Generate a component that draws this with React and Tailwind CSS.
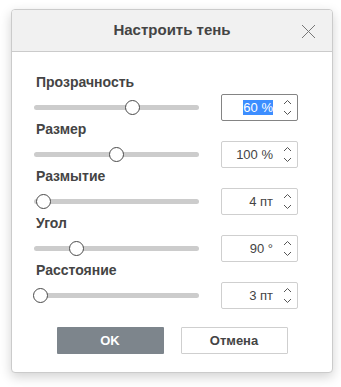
import React from 'react';

const rows = [
  { label: 'Прозрачность', value: '60 %', thumb: 98, focused: true },
  { label: 'Размер', value: '100 %', thumb: 82 },
  { label: 'Размытие', value: '4 пт', thumb: 9 },
  { label: 'Угол', value: '90 °', thumb: 42 },
  { label: 'Расстояние', value: '3 пт', thumb: 6 },
];

const Spinner = () => (
  <div className="flex flex-col items-center justify-center gap-[5px] w-[12px]">
    <svg width="9" height="6" viewBox="0 0 9 6">
      <path d="M1 5 L4.5 1.5 L8 5" fill="none" stroke="#555" strokeWidth="1" />
    </svg>
    <svg width="9" height="6" viewBox="0 0 9 6">
      <path d="M1 1 L4.5 4.5 L8 1" fill="none" stroke="#555" strokeWidth="1" />
    </svg>
  </div>
);

const Row = ({ label, value, thumb, focused }) => (
  <div className="flex flex-col">
    <div className="h-[20px] pl-[24px] text-[14px] font-bold text-[#444] leading-[16px]">{label}</div>
    <div className="flex items-center h-[27px]">
      <div className="relative ml-[22px] w-[165px] h-[5px] rounded-full bg-[#cccccc]">
        <div
          className="absolute top-[-5px] w-[15px] h-[15px] rounded-full bg-white border border-[#4a4a4a]"
          style={{ left: thumb - 7 }}
        />
      </div>
      <div
        className={
          'ml-[22px] flex items-center w-[77px] h-[27px] border rounded-[2px] bg-white pr-[4px] ' +
          (focused ? 'border-[#848484]' : 'border-[#cfcfcf]')
        }
      >
        <div className="flex-1 text-right pr-[8px] text-[13px] text-[#444]">
          {focused ? <span className="bg-[#3d8eff] text-white">{value}</span> : value}
        </div>
        <Spinner />
      </div>
    </div>
  </div>
);

export default function App() {
  return (
    <div className="w-[341px] h-[387px] bg-white pt-[9px] pl-[11px]" style={{ fontFamily: '"Liberation Sans", Arial, sans-serif' }}>
      <div className="w-[322px] h-[364px] flex flex-col rounded-[4px] border border-[#cbcbcb] bg-white shadow-[0_4px_12px_rgba(0,0,0,0.18)] overflow-hidden">
        <div className="relative h-[42px] flex items-center justify-center bg-[#f1f1f1] border-b border-[#cbcbcb]">
          <span className="text-[15px] font-bold text-[#444]">Настроить тень</span>
          <svg className="absolute right-[16px] top-[14px]" width="15" height="15" viewBox="0 0 15 15">
            <path d="M1 1 L14 14 M14 1 L1 14" stroke="#777" strokeWidth="1" />
          </svg>
        </div>
        <div className="flex flex-col pt-[22px]">
          {rows.map((r) => (
            <Row key={r.label} {...r} />
          ))}
        </div>
        <div className="flex justify-center gap-[17px] mt-[18px]">
          <button className="w-[107px] h-[27px] bg-[#7d858c] text-white text-[13px] font-bold rounded-[1px]">OK</button>
          <button className="w-[107px] h-[27px] bg-white border border-[#cfcfcf] text-[#444] text-[13px] font-bold rounded-[1px]">Отмена</button>
        </div>
      </div>
    </div>
  );
}
